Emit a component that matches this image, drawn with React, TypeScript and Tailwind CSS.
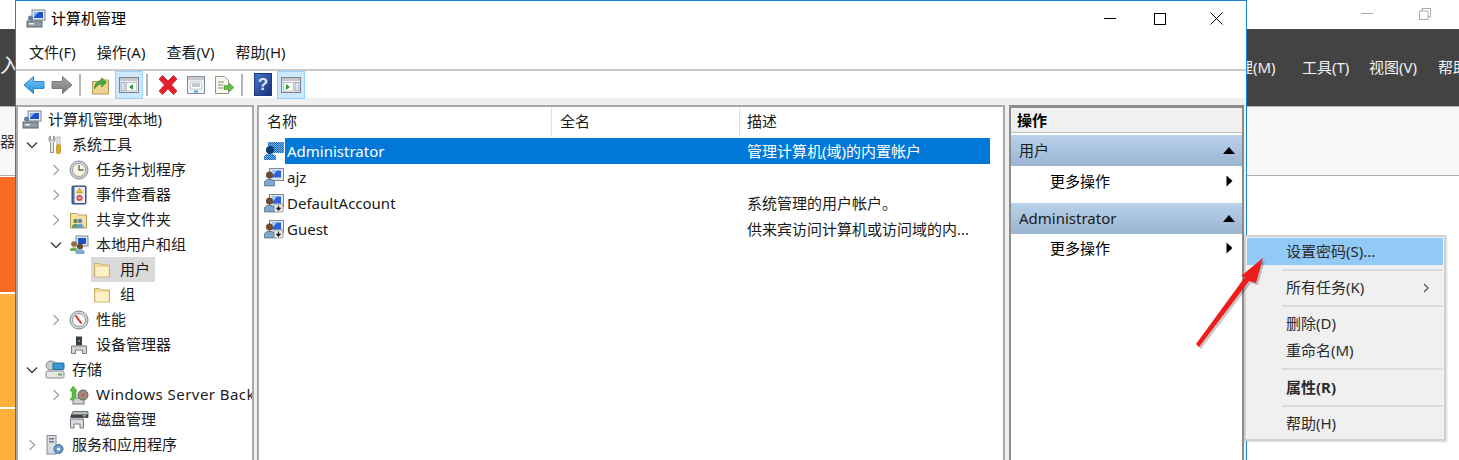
import type { ReactNode } from "react";

const UI_FONT = "font-['Noto_Sans','Noto_Sans_CJK_SC',sans-serif]";

function Folder({ size = 18 }: { size?: number }) {
  return (
    <svg width={size} height={size} viewBox="0 0 18 18">
      <path d="M1.500 2.500h5l1.500 1.500h8.500v12h-15z" fill="#f3dc9c" stroke="#c9b06e" />
      <path d="M2.500 6h13v9.500h-13z" fill="#fdf0c4" />
    </svg>
  );
}

function Computer({ size = 20 }: { size?: number }) {
  return (
    <svg width={size} height={size} viewBox="0 0 20 20">
      <rect x="6" y="1" width="13" height="10" fill="#dfe6ee" stroke="#7b8794" />
      <rect x="8" y="3" width="9" height="6" fill="#1f50c8" />
      <path d="M8 3h5l-5 5z" fill="#7fb2ef" />
      <rect x="1" y="12" width="15" height="6" fill="#8f9aa3" stroke="#5d666e" />
      <rect x="3" y="14" width="5" height="1.500" fill="#e6eaee" />
      <circle cx="4.500" cy="9" r="2.500" fill="#5f7f9f" />
    </svg>
  );
}

function User({ variant, size = 20 }: { variant: "plain" | "down" | "selected"; size?: number }) {
  if (variant === "selected") {
    return (
      <svg width={size} height={size} viewBox="0 0 20 20" className="shrink-0">
        <defs>
          <pattern id="dither" width="2" height="2" patternUnits="userSpaceOnUse">
            <rect width="2" height="2" fill="#0c68c4" />
            <rect width="1" height="1" fill="#6fa6dc" />
            <rect x="1" y="1" width="1" height="1" fill="#9cc0e4" />
          </pattern>
        </defs>
        <rect x="4" y="1" width="16" height="11" fill="url(#dither)" />
        <circle cx="6" cy="9" r="4" fill="#123e75" />
        <path d="M0 19v-4l3-2h6l3 2v4z" fill="url(#dither)" />
      </svg>
    );
  }
  return (
    <svg width={size} height={size} viewBox="0 0 20 20" className="shrink-0">
      <rect x="5.500" y="1.500" width="14" height="12" fill="#e4e8ec" stroke="#7b8794" />
      <rect x="8" y="3.500" width="9" height="7" fill="#2a62d8" />
      <path d="M8 3.500h5l-5 6z" fill="#a9cdf3" />
      <circle cx="5.500" cy="8" r="3.500" fill="#6b4a2e" />
      <path d="M0.500 19v-4.500l2.500-2h5l2.500 2v4.500z" fill="#7da8d0" stroke="#39506a" strokeWidth="0.600" />
      {variant === "down" && (
        <>
          <rect x="10" y="11" width="9" height="8" rx="1" fill="#e8e8e8" stroke="#666" strokeWidth="0.600" />
          <path d="M14.500 12.500v3M12.500 15l2 2.500 2-2.500z" fill="#222" stroke="#222" />
        </>
      )}
    </svg>
  );
}

function TreeIcon({ name }: { name: string }) {
  switch (name) {
    case "computer":
      return <Computer />;
    case "tools":
      return (
        <svg width="20" height="20" viewBox="0 0 20 20">
          <path d="M4 2v4l1.500 1.500v10h3v-10L10 6V2L8.500 1v4h-3V1z" fill="#e8e8e8" stroke="#777" strokeWidth="0.800" />
          <rect x="12" y="2" width="3" height="8" fill="#ececec" stroke="#888" strokeWidth="0.600" />
          <rect x="11.500" y="10" width="4" height="8.500" rx="1" fill="#e8ab18" stroke="#9a7208" strokeWidth="0.600" />
        </svg>
      );
    case "clock":
      return (
        <svg width="20" height="20" viewBox="0 0 20 20">
          <circle cx="10" cy="10" r="9" fill="#c9ced3" stroke="#8b9197" />
          <circle cx="10" cy="10" r="6.500" fill="#fbf6e4" stroke="#9aa0a6" />
          <path d="M10 5v5h4.500" fill="none" stroke="#6b5f3e" strokeWidth="1.300" />
        </svg>
      );
    case "log":
      return (
        <svg width="20" height="20" viewBox="0 0 20 20">
          <rect x="3" y="1" width="14" height="18" rx="1" fill="#4d6fa5" stroke="#33496f" />
          <rect x="5.500" y="2" width="10.500" height="16" fill="#e9edf3" />
          <path d="M10.500 3l3 5h-6z" fill="#f5c518" stroke="#8f7410" strokeWidth="0.500" />
          <circle cx="10.500" cy="13" r="3" fill="#d9444a" />
          <rect x="9" y="12.500" width="3" height="1" fill="#fff" />
        </svg>
      );
    case "share":
      return (
        <svg width="20" height="20" viewBox="0 0 20 20">
          <path d="M1.500 3.500h6l1.500 1.500h8.500v13h-16z" fill="#f4e1a6" stroke="#b89f60" />
          <circle cx="6.500" cy="11" r="2.200" fill="#6f8a4a" />
          <circle cx="11" cy="11" r="2.200" fill="#5b86ad" />
          <path d="M3 18v-2.500l2-1.500h3l2 1.500v2.500z" fill="#63a06a" />
          <path d="M8 18v-2.500l1.500-1.500h3l2 1.500v2.500z" fill="#6c9cc8" />
        </svg>
      );
    case "group":
      return (
        <svg width="20" height="20" viewBox="0 0 20 20">
          <rect x="7" y="1" width="12" height="10" fill="#dfe6ee" stroke="#7b8794" />
          <rect x="9" y="3" width="8" height="6" fill="#1f50c8" />
          <circle cx="5" cy="9" r="2.800" fill="#8a6a3e" />
          <circle cx="11" cy="11.500" r="3" fill="#6b4a2e" />
          <path d="M1 16v-2l2-1.500h4l1 1.500v2z" fill="#6fae5a" />
          <path d="M6.500 19v-3l2-1.500h5l2 1.500v3z" fill="#7da8d0" />
        </svg>
      );
    case "perf":
      return (
        <svg width="20" height="20" viewBox="0 0 20 20">
          <circle cx="10" cy="10" r="9" fill="#d5d9dc" stroke="#7f868c" />
          <circle cx="10" cy="10" r="6.500" fill="#fbfbfb" stroke="#8b9197" />
          <path d="M6.500 5.500l6 8" stroke="#d2352e" strokeWidth="2" />
        </svg>
      );
    case "device":
      return (
        <svg width="20" height="20" viewBox="0 0 20 20">
          <rect x="7" y="1.500" width="6" height="9" fill="#3c4046" />
          <rect x="9.500" y="5" width="1.500" height="2" fill="#56c454" />
          <path d="M2.500 11h15v7.500h-4V15h-7v3.500h-4z" fill="#d3d6d9" stroke="#777c82" />
        </svg>
      );
    case "storage":
      return (
        <svg width="20" height="20" viewBox="0 0 20 20">
          <ellipse cx="6" cy="5.500" rx="5" ry="4.500" fill="#c8cccf" stroke="#888" />
          <rect x="8" y="3" width="11" height="6.500" rx="1" fill="#3a9ad8" stroke="#20679c" />
          <rect x="1" y="11" width="18" height="7" rx="1.500" fill="#e4e6e8" stroke="#7f868c" />
          <rect x="13" y="13.500" width="4" height="2" fill="#66b04c" />
        </svg>
      );
    case "backup":
      return (
        <svg width="20" height="20" viewBox="0 0 20 20">
          <rect x="4" y="13" width="11" height="6" fill="#cfd2d5" stroke="#777" />
          <circle cx="14" cy="10" r="5" fill="#9a8d80" stroke="#6d6055" />
          <circle cx="14" cy="10" r="1.500" fill="#d85a3a" />
          <path d="M4 1L1 6h2v6l-2 3h3l3-3V6h1z" fill="#58c23c" stroke="#2c8a1a" strokeWidth="0.500" />
        </svg>
      );
    case "disk":
      return (
        <svg width="20" height="20" viewBox="0 0 20 20">
          <path d="M4 1.500h15v6H1.500z" fill="#b9bdc0" stroke="#686d72" />
          <rect x="2" y="4.500" width="17" height="3" fill="#3e4247" />
          <rect x="14" y="5" width="3" height="1.500" fill="#6fd05a" />
          <path d="M1.500 9h13v9h-3.500v-4H5v4H1.500z" fill="#d8dadc" stroke="#777c82" />
        </svg>
      );
    default:
      return (
        <svg width="20" height="20" viewBox="0 0 20 20">
          <rect x="2" y="0.500" width="9" height="18.500" fill="#d7dde3" stroke="#868d94" />
          <rect x="4" y="3" width="5" height="1.500" fill="#70787f" />
          <rect x="4" y="6" width="5" height="1.500" fill="#70787f" />
          <circle cx="13.500" cy="14" r="4.500" fill="#6a9ad0" stroke="#41688f" />
          <circle cx="13.500" cy="14" r="1.600" fill="#eaf2fa" />
        </svg>
      );
  }
}

function Chevron({ dir }: { dir: "right" | "down" | "none" }) {
  if (dir === "none") return <span className="w-[12px] shrink-0" />;
  return (
    <svg width="12" height="12" viewBox="0 0 12 12" className="shrink-0">
      {dir === "down" ? (
        <path d="M1 3.500l5 5 5-5" fill="none" stroke="#404040" strokeWidth="1.400" />
      ) : (
        <path d="M3.500 1l5 5-5 5" fill="none" stroke="#a6a6a6" strokeWidth="1.400" />
      )}
    </svg>
  );
}

type TreeRow = { label: string; icon: string; depth: number; arrow: "right" | "down" | "none"; active?: boolean; wide?: boolean };

const TREE: TreeRow[] = [
  { label: "系统工具", icon: "tools", depth: 0, arrow: "down" },
  { label: "任务计划程序", icon: "clock", depth: 1, arrow: "right" },
  { label: "事件查看器", icon: "log", depth: 1, arrow: "right" },
  { label: "共享文件夹", icon: "share", depth: 1, arrow: "right" },
  { label: "本地用户和组", icon: "group", depth: 1, arrow: "down" },
  { label: "用户", icon: "folder", depth: 2, arrow: "none", active: true },
  { label: "组", icon: "folder", depth: 2, arrow: "none" },
  { label: "性能", icon: "perf", depth: 1, arrow: "right" },
  { label: "设备管理器", icon: "device", depth: 1, arrow: "none" },
  { label: "存储", icon: "storage", depth: 0, arrow: "down" },
  { label: "Windows Server Backup", icon: "backup", depth: 1, arrow: "right", wide: true },
  { label: "磁盘管理", icon: "disk", depth: 1, arrow: "none" },
  { label: "服务和应用程序", icon: "services", depth: 0, arrow: "right" },
];

function Tree() {
  return (
    <div className="w-[238px] shrink-0 bg-white border-t-2 border-l-2 border-r-2 border-[#a9a9a9] overflow-hidden text-[15px] text-[#1a1a1a]">
      <div className="flex items-center h-[25px] pl-[4px] gap-[6px] whitespace-nowrap">
        <Computer />
        计算机管理(本地)
      </div>
      {TREE.map((row) => (
        <div key={row.label} className="flex items-center h-[25px] whitespace-nowrap">
          {row.depth === 0 && <span className="w-[8px] shrink-0" />}
          {row.depth === 1 && <span className="w-[32px] shrink-0" />}
          {row.depth === 2 && <span className="w-[73px] shrink-0" />}
          {row.depth < 2 && <Chevron dir={row.arrow} />}
          {row.depth < 2 && <span className="w-[7px] shrink-0" />}
          {row.depth === 2 ? (
            <div className={`flex items-center h-[25px] gap-[9px] pl-[2px] pr-[5px] ${row.active ? "bg-[#d9d9d9]" : ""}`}>
              <Folder />
              {row.label}
            </div>
          ) : (
            <div className={`flex items-center gap-[7px] ${row.wide ? "tracking-[0.45px]" : ""}`}>
              <TreeIcon name={row.icon} />
              {row.label}
            </div>
          )}
        </div>
      ))}
    </div>
  );
}

const USERS = [
  { name: "Administrator", desc: "管理计算机(域)的内置帐户", icon: "selected" as const, selected: true },
  { name: "ajz", desc: "", icon: "plain" as const },
  { name: "DefaultAccount", desc: "系统管理的用户帐户。", icon: "down" as const },
  { name: "Guest", desc: "供来宾访问计算机或访问域的内...", icon: "down" as const },
];

function ListPane() {
  return (
    <div className="w-[748px] shrink-0 ml-[3px] bg-white border-t-2 border-l-2 border-r-2 border-[#a9a9a9] text-[15px] text-[#1a1a1a] overflow-hidden">
      <div className="flex h-[29px] items-center w-[732px]">
        <div className="w-[293px] pl-[8px] h-full flex items-center border-r border-[#e3e3e3]">名称</div>
        <div className="w-[188px] pl-[8px] h-full flex items-center border-r border-[#e3e3e3]">全名</div>
        <div className="pl-[7px]">描述</div>
      </div>
      <div className="w-[731px] pt-[2px]">
        {USERS.map((u) => (
          <div key={u.name} className="flex items-center h-[26px] pl-[5px]">
            <User variant={u.icon} />
            <span className="w-[1px] shrink-0" />
            <div className={`flex items-center h-[26px] flex-1 pl-[2px] ${u.selected ? "bg-[#0078d7] text-white" : ""}`}>
              <span className="w-[460px] shrink-0">{u.name}</span>
              <span className="whitespace-nowrap">{u.desc}</span>
            </div>
          </div>
        ))}
      </div>
    </div>
  );
}

function ActionGroup({ title }: { title: string }) {
  return (
    <div className="flex items-center justify-between h-[31px] pl-[8px] pr-[7px] bg-gradient-to-b from-[#b9d1ea] to-[#9ab5d2] text-[#1a1a1a]">
      {title}
      <svg width="12" height="7" viewBox="0 0 12 7">
        <path d="M6 0l6 7H0z" fill="#000" />
      </svg>
    </div>
  );
}

function ActionItem({ tall }: { tall?: boolean }) {
  return (
    <div className={`flex items-center justify-between pl-[39px] pr-[9px] bg-white ${tall ? "h-[30px]" : "h-[28px]"}`}>
      更多操作
      <svg width="7" height="12" viewBox="0 0 7 12">
        <path d="M0.500 0.500l6 5.500-6 5.500z" fill="#000" />
      </svg>
    </div>
  );
}

function ActionsPane() {
  return (
    <div className="w-[235px] shrink-0 ml-[4px] border-t-[3px] border-l-2 border-r-2 border-[#8c8c8c] bg-white text-[15px] overflow-hidden">
      <div className="h-[25px] pl-[6px] flex items-center bg-[#f0f0f0] font-bold border-b border-[#bdbdbd]">操作</div>
      <div className="h-[2px] bg-white" />
      <ActionGroup title="用户" />
      <ActionItem tall />
      <div className="h-[7px]" />
      <ActionGroup title="Administrator" />
      <ActionItem />
    </div>
  );
}

function ToolBtn({ children, on }: { children: ReactNode; on?: boolean }) {
  return (
    <div className={`w-[28px] h-[28px] shrink-0 flex items-center justify-center ${on ? "bg-[#cce8ff] border border-[#99d1ff]" : ""}`}>
      {children}
    </div>
  );
}

function PaneIcon({ flip }: { flip?: boolean }) {
  return (
    <svg width="22" height="20" viewBox="0 0 22 20">
      <rect x="1.500" y="2.500" width="19" height="15" fill="#f3f3f3" stroke="#7e8388" />
      <rect x="2" y="3" width="18" height="3" fill="#c4c8cc" />
      {flip ? (
        <>
          <rect x="3.500" y="7.500" width="10" height="8.500" fill="#fff" stroke="#a6abb0" strokeWidth="0.700" />
          <rect x="15" y="7.500" width="4" height="8.500" fill="#dbe6f2" stroke="#7f93a8" strokeWidth="0.700" />
          <path d="M6 9v6l4-3z" fill="#2f9e3f" />
        </>
      ) : (
        <>
          <rect x="3" y="7.500" width="4" height="8.500" fill="#dbe6f2" stroke="#7f93a8" strokeWidth="0.700" />
          <rect x="8.500" y="7.500" width="10" height="8.500" fill="#fff" stroke="#a6abb0" strokeWidth="0.700" />
          <path d="M15 9v6l-4-3z" fill="#2f9e3f" />
        </>
      )}
    </svg>
  );
}

function Sep() {
  return <div className="w-[2px] h-[22px] mx-[3px] bg-[#b5b5b5] shrink-0" />;
}

function Toolbar() {
  return (
    <div className="flex items-center h-[29px] bg-white pl-[4px] border-t-2 border-[#c8c8c8]">
      <ToolBtn>
        <svg width="22" height="20" viewBox="0 0 22 20">
          <defs>
            <linearGradient id="backFill" x1="0" y1="0" x2="0" y2="1">
              <stop offset="0" stopColor="#7ecbf7" />
              <stop offset="1" stopColor="#1f8fe0" />
            </linearGradient>
          </defs>
          <path d="M1 10l9.500-8.500v5H21v7H10.500v5z" fill="url(#backFill)" stroke="#2a86c8" strokeLinejoin="round" />
        </svg>
      </ToolBtn>
      <ToolBtn>
        <svg width="22" height="20" viewBox="0 0 22 20">
          <defs>
            <linearGradient id="forwardFill" x1="0" y1="0" x2="0" y2="1">
              <stop offset="0" stopColor="#a8a8a8" />
              <stop offset="1" stopColor="#777" />
            </linearGradient>
          </defs>
          <path d="M21 10l-9.500-8.500v5H1v7h10.500v5z" fill="url(#forwardFill)" stroke="#7a7a7a" strokeLinejoin="round" />
        </svg>
      </ToolBtn>
      <Sep />
      <div className="w-[3px]" />
      <ToolBtn>
        <svg width="20" height="22" viewBox="0 0 20 22">
          <path d="M1.500 7.500h6l1-1.500h9v14h-16z" fill="#efd48f" stroke="#b0935a" />
          <path d="M3.500 15c0-6 3-8 7-8V3.500l5 5-5 4.500V10c-3 0-5 2-7 5z" fill="#46ad38" stroke="#23801f" strokeWidth="0.500" />
        </svg>
      </ToolBtn>
      <ToolBtn on>
        <PaneIcon />
      </ToolBtn>
      <Sep />
      <div className="w-[3px]" />
      <ToolBtn>
        <svg width="22" height="22" viewBox="0 0 22 22">
          <path d="M2 5l3.500-3.500L11 7l5.500-5.500L20 5l-5.500 6 5.500 6-3.500 3.500L11 15l-5.500 5.500L2 17l5.500-6z" fill="#e5202a" stroke="#b5262c" strokeWidth="0.800" strokeLinejoin="round" />
        </svg>
      </ToolBtn>
      <ToolBtn>
        <svg width="20" height="20" viewBox="0 0 20 20">
          <rect x="1.500" y="1.500" width="17" height="17" fill="#eef1f4" stroke="#8a9097" />
          <rect x="2" y="2" width="16" height="3" fill="#c6cbd0" />
          <rect x="4.500" y="7" width="11" height="7" fill="#fff" stroke="#b6bcc2" strokeWidth="0.700" />
          <path d="M6 9h8M6 11h8" stroke="#8d96a0" />
          <rect x="8" y="15.500" width="4" height="2" fill="#3fa9d8" />
        </svg>
      </ToolBtn>
      <ToolBtn>
        <svg width="22" height="20" viewBox="0 0 22 20">
          <path d="M2.500 1.500h9l4 4v13h-13z" fill="#f8f6ea" stroke="#96948a" />
          <path d="M5 7h6M5 10h5M5 13h5" stroke="#8a8a7a" />
          <path d="M11 10.500h5V8l5 4.500-5 4.500v-2.500h-5z" fill="#5fbe47" stroke="#3f8f2a" strokeWidth="0.500" />
        </svg>
      </ToolBtn>
      <Sep />
      <div className="w-[3px]" />
      <ToolBtn>
        <svg width="18" height="23" viewBox="0 0 18 23">
          <defs>
            <linearGradient id="helpFill" x1="0" y1="0" x2="1" y2="1">
              <stop offset="0" stopColor="#4a78d0" />
              <stop offset="1" stopColor="#152f7a" />
            </linearGradient>
          </defs>
          <rect x="0.500" y="0.500" width="17" height="22" fill="url(#helpFill)" stroke="#1b3a82" />
          <text x="9" y="17" textAnchor="middle" fontSize="17" fontWeight="700" fill="#dfe7f7" fontFamily="Liberation Sans">?</text>
        </svg>
      </ToolBtn>
      <ToolBtn on>
        <PaneIcon flip />
      </ToolBtn>
    </div>
  );
}

function ContextMenu() {
  const sep = <div className="h-[2px] mt-[4px] mb-[3px] ml-[35px] bg-[#dcdcdc]" />;
  return (
    <div className={`absolute left-[1244px] top-[235px] w-[202px] h-[206px] bg-[#f0f0f0] border-2 border-[#d0d0d0] text-[15px] text-[#2b2b2b] p-[1px] shadow-[1px_1px_2px_rgba(0,0,0,0.15)] ${UI_FONT}`}>
      <div className="h-[27px] pl-[39px] flex items-center bg-[#91c9f7]">设置密码(S)...</div>
      {sep}
      <div className="h-[27px] pl-[39px] pr-[13px] flex items-center justify-between">
        所有任务(K)
        <svg width="7" height="10" viewBox="0 0 7 10">
          <path d="M1 1l4 4-4 4" fill="none" stroke="#555" strokeWidth="1.300" />
        </svg>
      </div>
      {sep}
      <div className="h-[27px] pl-[39px] flex items-center">删除(D)</div>
      <div className="h-[27px] pl-[39px] flex items-center">重命名(M)</div>
      <div className="h-[2px] mt-[4px] mb-[4px] ml-[35px] bg-[#dcdcdc]" />
      <div className="h-[27px] pl-[39px] flex items-center font-bold">属性(R)</div>
      {sep}
      <div className="h-[27px] pl-[39px] flex items-center">帮助(H)</div>
    </div>
  );
}

function RedArrow() {
  return (
    <svg className="absolute left-[1190px] top-[250px]" width="80" height="105" viewBox="0 0 80 105">
      <path d="M6 94l3 3 50-66 7 2 7-25-22 18 4 1z" fill="#000" fillOpacity="0.22" transform="translate(2 2)" />
      <path d="M6 94l3 3 50-66 7 2 7-25-22 18 4 1z" fill="#ee1c1c" />
    </svg>
  );
}

export default function App() {
  return (
    <div className={`relative w-[1459px] h-[460px] overflow-hidden bg-white ${UI_FONT}`}>
      {/* app behind the window */}
      <div className="flex justify-end items-center h-[29px] pr-[28px] gap-[46px] pb-[2px]">
        <div className="w-[12px] h-[1px] bg-[#a8a8a8]" />
        <svg width="12" height="12" viewBox="0 0 12 12">
          <path d="M3 3V.5h8.500V9H9M.5 3h8.500v8.500H.5z" fill="none" stroke="#a8a8a8" />
        </svg>
      </div>
      <div className="flex items-center h-[77px] bg-[#434343] text-[#f2f2f2] text-[15px] whitespace-nowrap">
        <div className="w-[1223px] shrink-0">
          <div className="w-[15px] overflow-hidden text-[20px] leading-[24px] pb-[3px]">入</div>
        </div>
        <span className="w-[79px] shrink-0">管理(M)</span>
        <span className="w-[67px] shrink-0">工具(T)</span>
        <span className="w-[69px] shrink-0">视图(V)</span>
        <span>帮助(H)</span>
      </div>
      <div className="h-[70px] bg-[#f7f7f7] border-b border-t border-[#b0b0b0] flex items-center text-[15px] text-[#333]">
        <span className="w-[15px] overflow-hidden whitespace-nowrap flex justify-end">器</span>
      </div>
      <div className="w-[15px] pt-[1px]">
        <div className="h-[115px] bg-[#f96a23]" />
        <div className="h-[2px] bg-white" />
        <div className="h-[113px] bg-[#ffb03c]" />
        <div className="h-[2px] bg-white" />
        <div className="h-[60px] bg-[#ffb03c]" />
      </div>

      {/* computer management window */}
      <div className="absolute left-[15px] top-0 w-[1232px] h-[470px] bg-[#f0f0f0] border-t border-x border-[#1883d7] flex flex-col">
        <div className="flex items-center h-[35px] bg-white pl-[10px] text-[15px] text-black gap-[5px] shrink-0">
          <Computer />
          <span className="flex-1">计算机管理</span>
          <div className="flex items-center">
            <div className="w-[44px] flex justify-center">
              <div className="w-[12px] h-[1px] bg-black" />
            </div>
            <div className="w-[56px] flex justify-center">
              <div className="w-[12px] h-[12px] border border-black" />
            </div>
            <svg className="mr-[23px] ml-[22px]" width="13" height="13" viewBox="0 0 13 13">
              <path d="M.5.500l12 12M12.500.500l-12 12" stroke="#000" />
            </svg>
          </div>
        </div>
        <div className="flex items-center h-[33px] bg-white pl-[13px] gap-[21px] text-[15px] text-[#1a1a1a] shrink-0">
          <span>文件(F)</span>
          <span>操作(A)</span>
          <span>查看(V)</span>
          <span>帮助(H)</span>
        </div>
        <Toolbar />
        <div className="flex flex-1 pt-[7px] min-h-0 overflow-hidden">
          <Tree />
          <ListPane />
          <ActionsPane />
        </div>
      </div>

      <ContextMenu />
      <RedArrow />
    </div>
  );
}
